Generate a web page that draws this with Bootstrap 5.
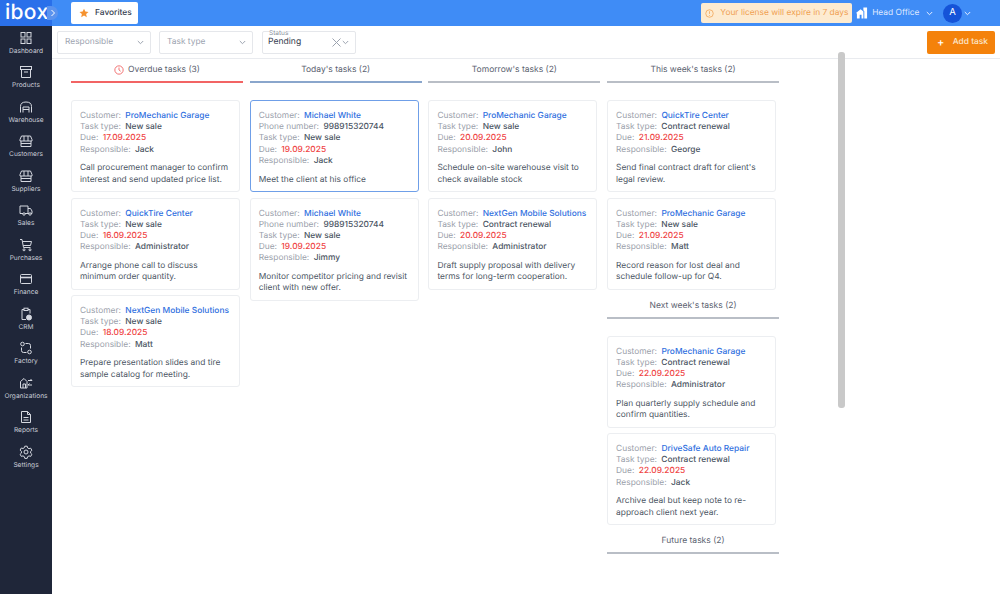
<!DOCTYPE html>
<html lang="en"><head><meta charset="utf-8"><title>Tasks</title>
<link rel="stylesheet" href="https://cdn.jsdelivr.net/npm/bootstrap@5.3.0/dist/css/bootstrap.min.css">
<style>
html,body{height:100%;overflow:hidden}
body{font-family:Inter,"Liberation Sans",sans-serif;font-size:8.4px;color:#4b5563;background:#fff;text-rendering:geometricPrecision}
.shell{height:594px;width:1000px;position:relative}
.rail{width:52px;background:#1f2639;flex:none}
.brand{height:26px;background:#2a70ea;color:#fff;position:relative}
.brand-text{font-size:21px;line-height:25px;font-weight:500;padding-left:5px;display:block;white-space:nowrap;width:48px;letter-spacing:.3px}
.brand-chev{position:absolute;right:-6px;top:6px;width:11px;height:14px;display:flex;align-items:center;justify-content:center;background:#5b93ee;border-radius:0 7px 7px 0;z-index:2}
.rail-item{height:34.500px;padding-top:4.500px;color:#c8ccd6;font-size:6.600px;line-height:9px;text-align:center;display:flex;flex-direction:column;align-items:center;white-space:nowrap}
.rail-item svg{width:14px;height:14px;margin-bottom:2px;flex:none}
.topbar{height:26px;background:#3f8cf6;flex:none;color:#e5edff}
.fav{height:22px;width:67px;background:#fff;border-radius:2px;color:#374151;font-weight:500;font-size:8.400px;margin-left:19px;gap:6px}
.license{width:151px;height:20px;background:#fdebd0;color:#f0a050;border-radius:2px;white-space:nowrap;gap:6px;padding-right:4px}
.office{color:#dfe9ff;font-size:8.400px}
.avatar{width:19px;height:19px;border-radius:50%;background:#1553d8;color:#fff;font-size:9.500px}
.filterbar{height:33px;border-bottom:1px solid #e9ebef;flex:none;padding-left:5px;padding-right:5px}
.sel{height:23px;width:94px;border:1px solid #e5e7eb;border-radius:2px;color:#9ca3af;padding:0 6px 0 7px;position:relative;background:#fff}
.sel+.sel{margin-left:8px}
.sel-c{color:#374151;font-size:8.600px;margin-left:9px!important;padding-left:5px}
.floatlabel{position:absolute;left:6px;top:-3px;font-size:6.500px;color:#8b919c;background:#fff;line-height:8px}
.addbtn{width:68px;height:23px;background:#f4820b;color:#fbe6cc;border-radius:2px;font-weight:500;padding:0 7px 0 9px}
.plus{font-size:11px;line-height:1;margin-left:1px;color:#fff}
.board{flex:1;min-height:0;overflow:hidden;padding-left:19px;column-gap:6.700px}
.board-col{width:172px;flex:none}
.col-head{height:24px;text-align:center;line-height:23px;border-bottom:2px solid #b9bec6;color:#5b6270;margin-bottom:17px;white-space:nowrap;font-size:8.500px}
.col-head.red{border-bottom-color:#f26464}
.col-head.blue{border-bottom-color:#8aa6cc}
.col-head.later{margin-top:-.5px}
.task{width:169px;border:1px solid #eceef1;border-radius:3px;padding:10px 8px 5.300px 8px;line-height:11.200px;margin-bottom:5.500px;background:#fff;white-space:nowrap}
.task.active{border-color:#6f9fe8}
.task .k{color:#9aa0aa;margin-right:2px}
.task .v{color:#4b5563;font-weight:500}
.task a{color:#2f6fe0;font-weight:500;text-decoration:none}
.task .d{color:#ef4444;font-weight:500}
.task p{margin:7.500px 0 0;white-space:normal;line-height:11.200px;color:#4b5563}
.thumb{position:absolute;left:838px;top:52px;width:7px;height:356px;background:#c9c9c9;border-radius:3px}
</style></head><body>
<div class="shell d-flex">
<aside class="rail d-flex flex-column">
<div class="brand"><span class="brand-text">ibox</span><span class="brand-chev"><svg width="6" height="8" viewBox="0 0 6 8"><path d="M1.500 1l3 3-3 3" fill="none" stroke="#fff"/></svg></span></div>
<nav>
<div class="rail-item"><svg viewBox="0 0 14 14" fill="none" stroke="#d5d8e0"><rect x="2" y="1.500" width="4" height="4.500"/><rect x="8" y="1.500" width="4" height="4.500"/><rect x="2" y="8" width="4" height="4.500"/><rect x="8" y="8" width="4" height="4.500"/></svg>Dashboard</div>
<div class="rail-item"><svg viewBox="0 0 14 14" fill="none" stroke="#d5d8e0"><rect x="1.500" y="1.500" width="11" height="3"/><path d="M2.500 4.500v8h9v-8M5 7h4"/></svg>Products</div>
<div class="rail-item"><svg viewBox="0 0 14 14" fill="none" stroke="#d5d8e0"><path d="M1.500 12.500V6.500Q1.500 2 7 2t5.500 4.500v6M4 12.500V7h6v5.500M4 9.500h6"/></svg>Warehouse</div>
<div class="rail-item"><svg viewBox="0 0 14 14" fill="none" stroke="#d5d8e0"><path d="M2.500 2h9l1.500 3.500v1.500h-12V5.500zM2 7v5.500h10V7M2 9.500h10M5 2v5M9 2v5"/></svg>Customers</div>
<div class="rail-item"><svg viewBox="0 0 14 14" fill="none" stroke="#d5d8e0"><path d="M2.500 2h9l1.500 3.500v1.500h-12V5.500zM2 7v5.500h10V7M2 9.500h10M5 2v5M9 2v5"/></svg>Suppliers</div>
<div class="rail-item"><svg viewBox="0 0 14 14" fill="none" stroke="#d5d8e0"><path d="M4 10.500H1V3h8v7.500H6M9 5.500h2.500L13 8v2.500h-1M9 10.500h1"/><circle cx="5" cy="11" r="1.200"/><circle cx="11" cy="11" r="1.200"/></svg>Sales</div>
<div class="rail-item"><svg viewBox="0 0 14 14" fill="none" stroke="#d5d8e0"><path d="M1 1.500h2l1.500 8h7M3.400 3.500h9.100l-1 4H4.200"/><circle cx="5" cy="11.800" r="1"/><circle cx="11" cy="11.800" r="1"/></svg>Purchases</div>
<div class="rail-item"><svg viewBox="0 0 14 14" fill="none" stroke="#d5d8e0"><rect x="1.500" y="2.500" width="11" height="9" rx="1"/><path d="M1.500 5.500h11" stroke-width="1.600"/></svg>Finance</div>
<div class="rail-item"><svg viewBox="0 0 14 14" fill="none" stroke="#d5d8e0"><path d="M5 2.500H3v10h4M9 2.500h2v4"/><rect x="5" y="1.200" width="4" height="2.300"/><circle cx="10" cy="10.500" r="2.500" fill="#d5d8e0"/></svg>CRM</div>
<div class="rail-item"><svg viewBox="0 0 14 14" fill="none" stroke="#d5d8e0"><circle cx="3.500" cy="3" r="1.800"/><circle cx="10.500" cy="11" r="1.800"/><path d="M6.500 2.500h3a2 2 0 0 1 2 2v3M7.500 11.500h-3a2 2 0 0 1-2-2v-3"/></svg>Factory</div>
<div class="rail-item"><svg viewBox="0 0 14 14" fill="none" stroke="#d5d8e0"><path d="M1.500 12V5.500L5 2.500l3 3V12zM4 12V8h2.500v4M9 4.500h4M11.500 3l1.500 1.500M13 9H9M10.500 7.500L9 9"/></svg>Organizations</div>
<div class="rail-item"><svg viewBox="0 0 14 14" fill="none" stroke="#d5d8e0"><path d="M2.500 1.500h6l3 3v8h-9zM8.500 1.500v3h3M4.500 7.500h5M4.500 10h5"/></svg>Reports</div>
<div class="rail-item"><svg viewBox="0 0 14 14" fill="none" stroke="#d5d8e0"><path d="M5.800 1.200h2.400l.4 1.700 1.400.8 1.700-.5 1.200 2.100-1.300 1.200v1.600l1.300 1.200-1.200 2.100-1.700-.5-1.400.8-.4 1.700H5.800l-.4-1.700-1.400-.8-1.700.5-1.200-2.100 1.300-1.200V6.300L1.100 5.100l1.200-2.100 1.700.5 1.400-.8z"/><circle cx="7" cy="7" r="2"/></svg>Settings</div>
</nav>
</aside>
<main class="flex-grow-1 d-flex flex-column" style="min-width:0">
<header class="topbar d-flex align-items-center">
<div class="fav d-flex align-items-center ps-2"><svg width="10" height="10" viewBox="0 0 24 24"><path fill="#f5922f" d="M12 1.500l3.200 7 7.600.8-5.700 5.100 1.600 7.500-6.700-3.900-6.700 3.900 1.600-7.500L1.200 9.300l7.600-.8z"/></svg>Favorites</div>
<div class="ms-auto d-flex align-items-center">
<div class="license d-flex align-items-center justify-content-end"><svg width="9" height="9" viewBox="0 0 12 12" fill="none" stroke="#f0a050"><circle cx="6" cy="6" r="5"/><path d="M6 3v3.500M6 8v1"/></svg>Your license will expire in 7 days</div>
<svg style="margin-left:3.700px" width="12" height="14" viewBox="0 0 13 14"><path fill="#fff" d="M0 7l5-4 3 2.500V13H6V9H4v4H1V7.500zM8 1l4 0v12H9V5L8 4z"/></svg>
<span class="office ms-1">Head Office</span>
<svg style="margin-left:6px" width="7" height="5" viewBox="0 0 7 5"><path d="M.8 1l2.700 2.700L6.200 1" fill="none" stroke="#e5edff"/></svg>
<span class="avatar d-flex align-items-center justify-content-center" style="margin-left:10.500px">A</span>
<svg style="margin-right:29px;margin-left:2px" width="7" height="5" viewBox="0 0 7 5"><path d="M.8 1l2.700 2.700L6.200 1" fill="none" stroke="#e5edff"/></svg>
</div>
</header>
<div class="filterbar d-flex align-items-center">
<div class="sel d-flex align-items-center justify-content-between">Responsible<svg width="7" height="5" viewBox="0 0 7 5"><path d="M.8 1l2.700 2.700L6.200 1" fill="none" stroke="#9ca3af"/></svg></div>
<div class="sel d-flex align-items-center justify-content-between">Task type<svg width="7" height="5" viewBox="0 0 7 5"><path d="M.8 1l2.700 2.700L6.200 1" fill="none" stroke="#9ca3af"/></svg></div>
<div class="sel sel-c d-flex align-items-center justify-content-between"><span class="floatlabel">Status</span>Pending<span class="d-flex align-items-center" style="gap:1px"><svg width="9" height="9" viewBox="0 0 9 9"><path d="M.5.500l8 8M8.500.500l-8 8" stroke="#9ca3af" fill="none"/></svg><svg width="7" height="5" viewBox="0 0 7 5"><path d="M.8 1l2.700 2.700L6.200 1" fill="none" stroke="#9ca3af"/></svg></span></div>
<div class="addbtn ms-auto d-flex align-items-center justify-content-between"><span class="plus">+</span>Add task</div>
</div>
<section class="board d-flex">
<div class="board-col">
<div class="col-head red d-flex align-items-center justify-content-center gap-1"><svg width="10" height="10" viewBox="0 0 12 12" fill="none" stroke="#ef5a5a"><circle cx="6" cy="6" r="5"/><path d="M6 3v3l2 1.500"/></svg><span>Overdue tasks (3)</span></div>
<div class="task"><span class="k">Customer:</span> <a href="#">ProMechanic Garage</a><br><span class="k">Task type:</span> <span class="v">New sale</span><br><span class="k">Due:</span> <span class="d">17.09.2025</span><br><span class="k">Responsible:</span> <span class="v">Jack</span><p>Call procurement manager to confirm interest and send updated price list.</p></div>
<div class="task"><span class="k">Customer:</span> <a href="#">QuickTire Center</a><br><span class="k">Task type:</span> <span class="v">New sale</span><br><span class="k">Due:</span> <span class="d">16.09.2025</span><br><span class="k">Responsible:</span> <span class="v">Administrator</span><p>Arrange phone call to discuss minimum order quantity.</p></div>
<div class="task"><span class="k">Customer:</span> <a href="#">NextGen Mobile Solutions</a><br><span class="k">Task type:</span> <span class="v">New sale</span><br><span class="k">Due:</span> <span class="d">18.09.2025</span><br><span class="k">Responsible:</span> <span class="v">Matt</span><p>Prepare presentation slides and tire sample catalog for meeting.</p></div>
</div>
<div class="board-col">
<div class="col-head blue">Today's tasks (2)</div>
<div class="task active"><span class="k">Customer:</span> <a href="#">Michael White</a><br><span class="k">Phone number:</span> <span class="v">998915320744</span><br><span class="k">Task type:</span> <span class="v">New sale</span><br><span class="k">Due:</span> <span class="d">19.09.2025</span><br><span class="k">Responsible:</span> <span class="v">Jack</span><p>Meet the client at his office</p></div>
<div class="task"><span class="k">Customer:</span> <a href="#">Michael White</a><br><span class="k">Phone number:</span> <span class="v">998915320744</span><br><span class="k">Task type:</span> <span class="v">New sale</span><br><span class="k">Due:</span> <span class="d">19.09.2025</span><br><span class="k">Responsible:</span> <span class="v">Jimmy</span><p>Monitor competitor pricing and revisit client with new offer.</p></div>
</div>
<div class="board-col">
<div class="col-head">Tomorrow's tasks (2)</div>
<div class="task"><span class="k">Customer:</span> <a href="#">ProMechanic Garage</a><br><span class="k">Task type:</span> <span class="v">New sale</span><br><span class="k">Due:</span> <span class="d">20.09.2025</span><br><span class="k">Responsible:</span> <span class="v">John</span><p>Schedule on-site warehouse visit to check available stock</p></div>
<div class="task"><span class="k">Customer:</span> <a href="#">NextGen Mobile Solutions</a><br><span class="k">Task type:</span> <span class="v">Contract renewal</span><br><span class="k">Due:</span> <span class="d">20.09.2025</span><br><span class="k">Responsible:</span> <span class="v">Administrator</span><p>Draft supply proposal with delivery terms for long-term cooperation.</p></div>
</div>
<div class="board-col">
<div class="col-head">This week's tasks (2)</div>
<div class="task"><span class="k">Customer:</span> <a href="#">QuickTire Center</a><br><span class="k">Task type:</span> <span class="v">Contract renewal</span><br><span class="k">Due:</span> <span class="d">21.09.2025</span><br><span class="k">Responsible:</span> <span class="v">George</span><p>Send final contract draft for client's legal review.</p></div>
<div class="task"><span class="k">Customer:</span> <a href="#">ProMechanic Garage</a><br><span class="k">Task type:</span> <span class="v">New sale</span><br><span class="k">Due:</span> <span class="d">21.09.2025</span><br><span class="k">Responsible:</span> <span class="v">Matt</span><p>Record reason for lost deal and schedule follow-up for Q4.</p></div>
<div class="col-head later">Next week's tasks (2)</div>
<div class="task"><span class="k">Customer:</span> <a href="#">ProMechanic Garage</a><br><span class="k">Task type:</span> <span class="v">Contract renewal</span><br><span class="k">Due:</span> <span class="d">22.09.2025</span><br><span class="k">Responsible:</span> <span class="v">Administrator</span><p>Plan quarterly supply schedule and confirm quantities.</p></div>
<div class="task"><span class="k">Customer:</span> <a href="#">DriveSafe Auto Repair</a><br><span class="k">Task type:</span> <span class="v">Contract renewal</span><br><span class="k">Due:</span> <span class="d">22.09.2025</span><br><span class="k">Responsible:</span> <span class="v">Jack</span><p>Archive deal but keep note to re-approach client next year.</p></div>
<div class="col-head later">Future tasks (2)</div>
</div>
</section>
</main>
<div class="thumb"></div>
</div>
<script src="https://cdn.jsdelivr.net/npm/bootstrap@5.3.0/dist/js/bootstrap.bundle.min.js"></script>
</body></html>
